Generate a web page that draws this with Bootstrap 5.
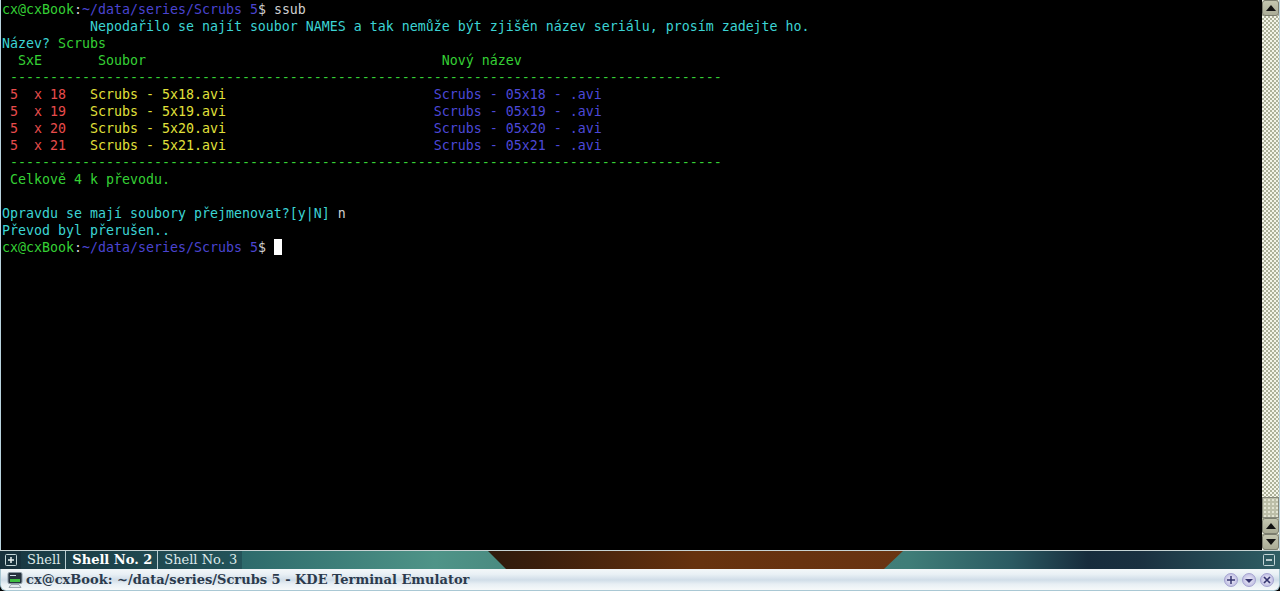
<!DOCTYPE html>
<html lang="cs">
<head>
<meta charset="utf-8">
<title>Konsole</title>
<link href="https://cdn.jsdelivr.net/npm/bootstrap@5.3.0/dist/css/bootstrap.min.css" rel="stylesheet">
<style>
html,body{height:591px;overflow:hidden;background:#000}
.desk{height:591px}
.term-wrap{height:550px;background:#000;border-left:1px solid #b9d3de}
.term{font:13.29px/17px "DejaVu Sans Mono",monospace;white-space:pre;padding:1px 0 0 1px;margin:0;color:#d0d0d0;overflow:hidden}
.tg{color:#35d035}.tb{color:#4a44d0}.tw{color:#d0d0d0}.tc{color:#3cd4d4}.tr{color:#e84c4c}.ty{color:#e0e03a}.tv{color:#4c48d8}
.cursor{display:inline-block;width:8px;height:16px;background:#fff;vertical-align:-3px}
.sbar{width:18px;border-right:1px solid #b9d3de;background-color:#e9ebd9;background-image:repeating-conic-gradient(#aeb29a 0 25%,#f4f5e8 0 50%);background-size:4px 4px}
.sbtn{height:16px;background:linear-gradient(#c4c6b0,#aaac96);border:1px solid #7b7d6e;border-radius:3px;display:flex;align-items:center;justify-content:center}
.sthumb{height:21px;background-color:#bcbea8;border:1px solid #85877a;background-image:radial-gradient(#e2e3d2 1px,transparent 1.2px);background-size:4px 4px}
.tabbar{height:19px;border-top:1px solid #c7d3d3;font:13px/18px "DejaVu Serif",serif;color:#dfeaea;position:relative}
.tab-art{position:absolute;left:0;top:0;width:1280px;height:18px}
.tabs,.tab-close{position:relative}
.tabs{background:linear-gradient(90deg,#183640,#24545a)}
.tab-add{width:21px;background:#17313c}
.tab-item{padding:0 5px 0 6px;border-right:1px solid #b9cdd1}
.tab-item.last{border-right:0}
.tab-on{font-weight:700;color:#fff}
.tab-close{padding-right:5px}
.titlebar{height:22px;background:linear-gradient(#f3f7f9 0,#e9f0f5 25%,#d0dde8 52%,#e8eff4 72%,#f6f9fa 100%);border:solid #a9c8d4;border-width:0 1px 1px;border-radius:0 0 6px 6px;font:700 13px/18px "DejaVu Serif",serif;color:#2b3a4c}
.tbtn{width:14px;height:14px;border-radius:50%;background:radial-gradient(#edecf9,#b4b2dc);border:1px solid #a4a2d0;display:flex;align-items:center;justify-content:center}
</style>
</head>
<body>
<div class="desk d-flex flex-column">
<div class="term-wrap d-flex">
<pre class="term flex-grow-1"><span class="tg">cx@cxBook</span><span class="tw">:</span><span class="tb">~/data/series/Scrubs 5</span><span class="tw">$ ssub</span>
<span class="tc">           Nepodařilo se najít soubor NAMES a tak nemůže být zjišěn název seriálu, prosím zadejte ho.</span>
<span class="tc">Název? </span><span class="tg">Scrubs</span>
<span class="tg">  SxE       Soubor                                     Nový název</span>
<span class="tg"> -----------------------------------------------------------------------------------------</span>
<span class="tr"> 5  x 18   </span><span class="ty">Scrubs - 5x18.avi</span>                          <span class="tv">Scrubs - 05x18 - .avi</span>
<span class="tr"> 5  x 19   </span><span class="ty">Scrubs - 5x19.avi</span>                          <span class="tv">Scrubs - 05x19 - .avi</span>
<span class="tr"> 5  x 20   </span><span class="ty">Scrubs - 5x20.avi</span>                          <span class="tv">Scrubs - 05x20 - .avi</span>
<span class="tr"> 5  x 21   </span><span class="ty">Scrubs - 5x21.avi</span>                          <span class="tv">Scrubs - 05x21 - .avi</span>
<span class="tg"> -----------------------------------------------------------------------------------------</span>
<span class="tg"> Celkově 4 k převodu.</span>

<span class="tc">Opravdu se mají soubory přejmenovat?[y|N] </span><span class="tw">n</span>
<span class="tc">Převod byl přerušen..</span>
<span class="tg">cx@cxBook</span><span class="tw">:</span><span class="tb">~/data/series/Scrubs 5</span><span class="tw">$ </span><span class="cursor"></span></pre>
<div class="sbar d-flex flex-column flex-shrink-0">
<div class="sbtn"><svg width="10" height="6"><path d="M5 0l5 6H0z" fill="#111"/></svg></div>
<div class="flex-grow-1"></div>
<div class="sthumb"></div>
<div class="sbtn"><svg width="10" height="6"><path d="M5 0l5 6H0z" fill="#111"/></svg></div>
<div class="sbtn"><svg width="10" height="6"><path d="M0 0h10L5 6z" fill="#111"/></svg></div>
</div>
</div>
<div class="tabbar d-flex justify-content-between flex-shrink-0">
<svg class="tab-art" viewBox="0 0 1280 18" preserveAspectRatio="none">
<defs>
<linearGradient id="gteal"><stop offset="0" stop-color="#24545a"/><stop offset=".19" stop-color="#2d6a6b"/><stop offset=".34" stop-color="#4f9488"/><stop offset=".4" stop-color="#4a8a80"/><stop offset=".71" stop-color="#3f7d78"/><stop offset=".79" stop-color="#2b5a62"/><stop offset=".85" stop-color="#172c3c"/><stop offset=".89" stop-color="#1a3040"/><stop offset="1" stop-color="#2f5e64"/></linearGradient>
<linearGradient id="gbrown"><stop offset="0" stop-color="#2e1a0c"/><stop offset=".12" stop-color="#3a1e0c"/><stop offset=".5" stop-color="#66320e"/><stop offset="1" stop-color="#6a3412"/></linearGradient>
</defs>
<rect width="1280" height="18" fill="url(#gteal)"/>
<path d="M488 0H903L884 18H506z" fill="url(#gbrown)"/>
</svg>
<div class="tabs d-flex">
<div class="tab-add d-flex align-items-center justify-content-center"><svg width="12" height="12"><rect x=".5" y=".5" width="11" height="11" rx="1" fill="none" stroke="#c4d6d8"/><path d="M3 6h6M6 3v6" stroke="#e8f0f0" stroke-width="1.5"/></svg></div>
<div class="tab-item">Shell</div>
<div class="tab-item tab-on">Shell No. 2</div>
<div class="tab-item last">Shell No. 3</div>
</div>
<div class="tab-close d-flex align-items-center"><svg width="12" height="12"><rect x=".5" y=".5" width="11" height="11" rx="1" fill="none" stroke="#c4d6d8"/><path d="M3 6h6" stroke="#e8f0f0" stroke-width="1.5"/></svg></div>
</div>
<div class="titlebar d-flex align-items-center flex-shrink-0">
<svg class="tico" width="18" height="18" viewBox="0 0 18 18" style="margin:0 2px 0 5px"><rect x="2" y="1.5" width="14" height="11" rx="1.5" fill="#26323e" stroke="#8a98a2"/><rect x="4" y="8" width="10" height="3" fill="#3fc040"/><rect x="4" y="4" width="6" height="1" fill="#cfe0e8"/><path d="M5 13.5h8l2 3H3z" fill="#e2e9ec" stroke="#7d8a94" stroke-width=".7"/></svg>
<span class="flex-grow-1">cx@cxBook: ~/data/series/Scrubs 5 - KDE Terminal Emulator</span>
<div class="d-flex gap-1" style="padding-right:5px">
<div class="tbtn"><svg width="8" height="8"><path d="M0 4h8M4 0v8" stroke="#33336e" stroke-width="1.5"/></svg></div>
<div class="tbtn"><svg width="8" height="8"><path d="M0 3h8L4 7z" fill="#33336e"/></svg></div>
<div class="tbtn"><svg width="8" height="8"><path d="M1 1l6 6M7 1L1 7" stroke="#33336e" stroke-width="1.7"/></svg></div>
</div>
</div>
</div>
<script src="https://cdn.jsdelivr.net/npm/bootstrap@5.3.0/dist/js/bootstrap.bundle.min.js"></script>
</body>
</html>
